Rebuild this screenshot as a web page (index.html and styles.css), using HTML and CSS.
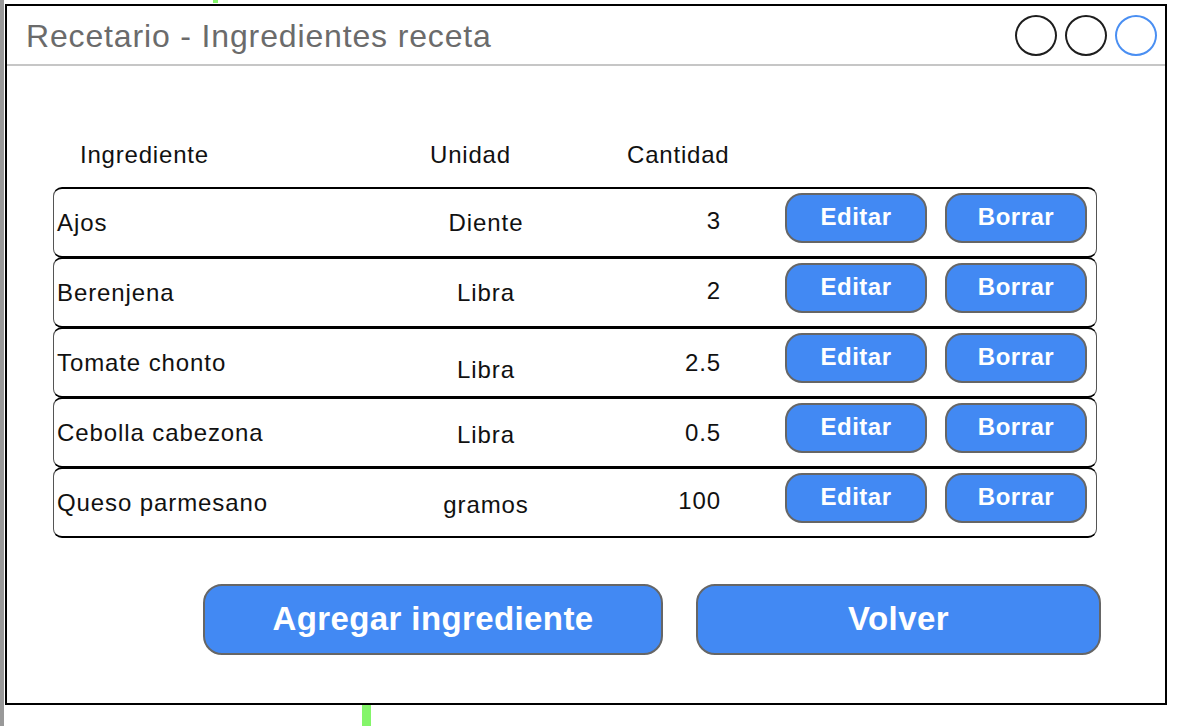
FILE: index.html
```html
<!DOCTYPE html>
<html lang="es">
<head>
<meta charset="utf-8">
<title>Recetario - Ingredientes receta</title>
<link rel="stylesheet" href="styles.css">
</head>
<body>
<div class="edge"></div>
<div class="mark mark-top"></div>
<div class="mark mark-bottom"></div>
<div class="window">
  <div class="titlebar">
    <div class="title">Recetario - Ingredientes receta</div>
    <div class="controls">
      <span class="dot"></span>
      <span class="dot"></span>
      <span class="dot dot-blue"></span>
    </div>
  </div>
  <div class="content">
    <div class="thead">
      <div class="th th-name">Ingrediente</div>
      <div class="th th-unit">Unidad</div>
      <div class="th th-qty">Cantidad</div>
    </div>
    <div class="rows">
      <div class="row">
        <div class="cell name">Ajos</div>
        <div class="cell unit">Diente</div>
        <div class="cell qty up">3</div>
        <div class="actions"><button class="btn">Editar</button><button class="btn">Borrar</button></div>
      </div>
      <div class="row">
        <div class="cell name">Berenjena</div>
        <div class="cell unit">Libra</div>
        <div class="cell qty up">2</div>
        <div class="actions"><button class="btn">Editar</button><button class="btn">Borrar</button></div>
      </div>
      <div class="row">
        <div class="cell name">Tomate chonto</div>
        <div class="cell unit down-lg">Libra</div>
        <div class="cell qty">2.5</div>
        <div class="actions"><button class="btn">Editar</button><button class="btn">Borrar</button></div>
      </div>
      <div class="row">
        <div class="cell name">Cebolla cabezona</div>
        <div class="cell unit down">Libra</div>
        <div class="cell qty">0.5</div>
        <div class="actions"><button class="btn">Editar</button><button class="btn">Borrar</button></div>
      </div>
      <div class="row">
        <div class="cell name">Queso parmesano</div>
        <div class="cell unit down">gramos</div>
        <div class="cell qty up">100</div>
        <div class="actions"><button class="btn">Editar</button><button class="btn">Borrar</button></div>
      </div>
    </div>
    <div class="footer">
      <button class="big-btn btn-add">Agregar ingrediente</button>
      <button class="big-btn btn-back">Volver</button>
    </div>
  </div>
</div>
</body>
</html>
```
FILE: styles.css
```css
* { box-sizing: border-box; }

html, body {
  margin: 0;
  padding: 0;
  background: #ffffff;
}

body {
  width: 1178px;
  height: 726px;
  overflow: hidden;
  display: flex;
  align-items: flex-start;
  position: relative;
  font-family: "Liberation Sans", Arial, Helvetica, sans-serif;
  color: #111;
}

.edge {
  width: 4px;
  height: 726px;
  background: #999999;
  flex: none;
}

.mark {
  position: absolute;
  background: #84f56a;
}
.mark-top { left: 213px; top: 0; width: 5px; height: 3px; }
.mark-bottom { left: 362px; top: 705px; width: 9px; height: 21px; }

.window {
  margin-left: 1px;
  margin-top: 4px;
  width: 1162px;
  height: 701px;
  border: 2px solid #000;
  background: #fff;
  display: flex;
  flex-direction: column;
}

.titlebar {
  height: 60px;
  border-bottom: 2px solid #c6c6c6;
  display: flex;
  align-items: center;
  justify-content: space-between;
  padding: 0 8px 0 19px;
}

.title {
  font-size: 32px;
  letter-spacing: 0.85px;
  color: #6b6b6b;
  padding-top: 3px;
}

.controls {
  display: flex;
  gap: 8px;
  padding-top: 1px;
}

.dot {
  width: 42px;
  height: 41px;
  border-radius: 50%;
  border: 2px solid #1e1e1e;
}
.dot-blue { border-color: #4a8ff2; }

.content {
  padding: 69px 0 0 46px;
}

.thead {
  width: 1044px;
  height: 40px;
  display: flex;
  align-items: center;
  padding-left: 27px;
  margin-bottom: 12px;
  font-size: 24px;
  letter-spacing: 0.8px;
}
.th-name { width: 350px; }
.th-unit { width: 197px; }

.rows {
  width: 1044px;
  display: flex;
  flex-direction: column;
}

.row {
  height: 71px;
  margin-top: -1px;
  border-top: 2px solid #000;
  border-bottom: 2px solid #000;
  border-left: 1.5px solid #555;
  border-right: 1.5px solid #555;
  border-radius: 9px;
  display: flex;
  align-items: center;
  font-size: 24px;
  letter-spacing: 0.9px;
}
.row:first-child { margin-top: 0; }

.cell { white-space: nowrap; }
.name { width: 382px; padding-left: 3px; }
.unit { width: 100px; text-align: center; }
.qty { width: 185px; text-align: right; }
.up { padding-bottom: 4px; }
.down { padding-top: 5px; }
.down-lg { padding-top: 14px; }

.actions {
  align-self: flex-start;
  margin-top: 4px;
  margin-left: 64px;
  display: flex;
  gap: 18px;
}

.btn {
  width: 142px;
  height: 50px;
  border: 2px solid #666;
  border-radius: 17px;
  background: #4289f3;
  color: #fff;
  font-family: "Liberation Sans", Arial, Helvetica, sans-serif;
  font-weight: bold;
  font-size: 24px;
  letter-spacing: 0.5px;
  padding: 0 0 3px 0;
}

.footer {
  margin-top: 46px;
  margin-left: 150px;
  display: flex;
  gap: 33px;
}

.big-btn {
  height: 71px;
  border: 2px solid #666;
  border-radius: 19px;
  background: #4289f3;
  color: #fff;
  font-family: "Liberation Sans", Arial, Helvetica, sans-serif;
  font-weight: bold;
  font-size: 33px;
  letter-spacing: 0.4px;
  padding: 0 0 2px 0;
}
.btn-add { width: 460px; }
.btn-back { width: 405px; }
```
